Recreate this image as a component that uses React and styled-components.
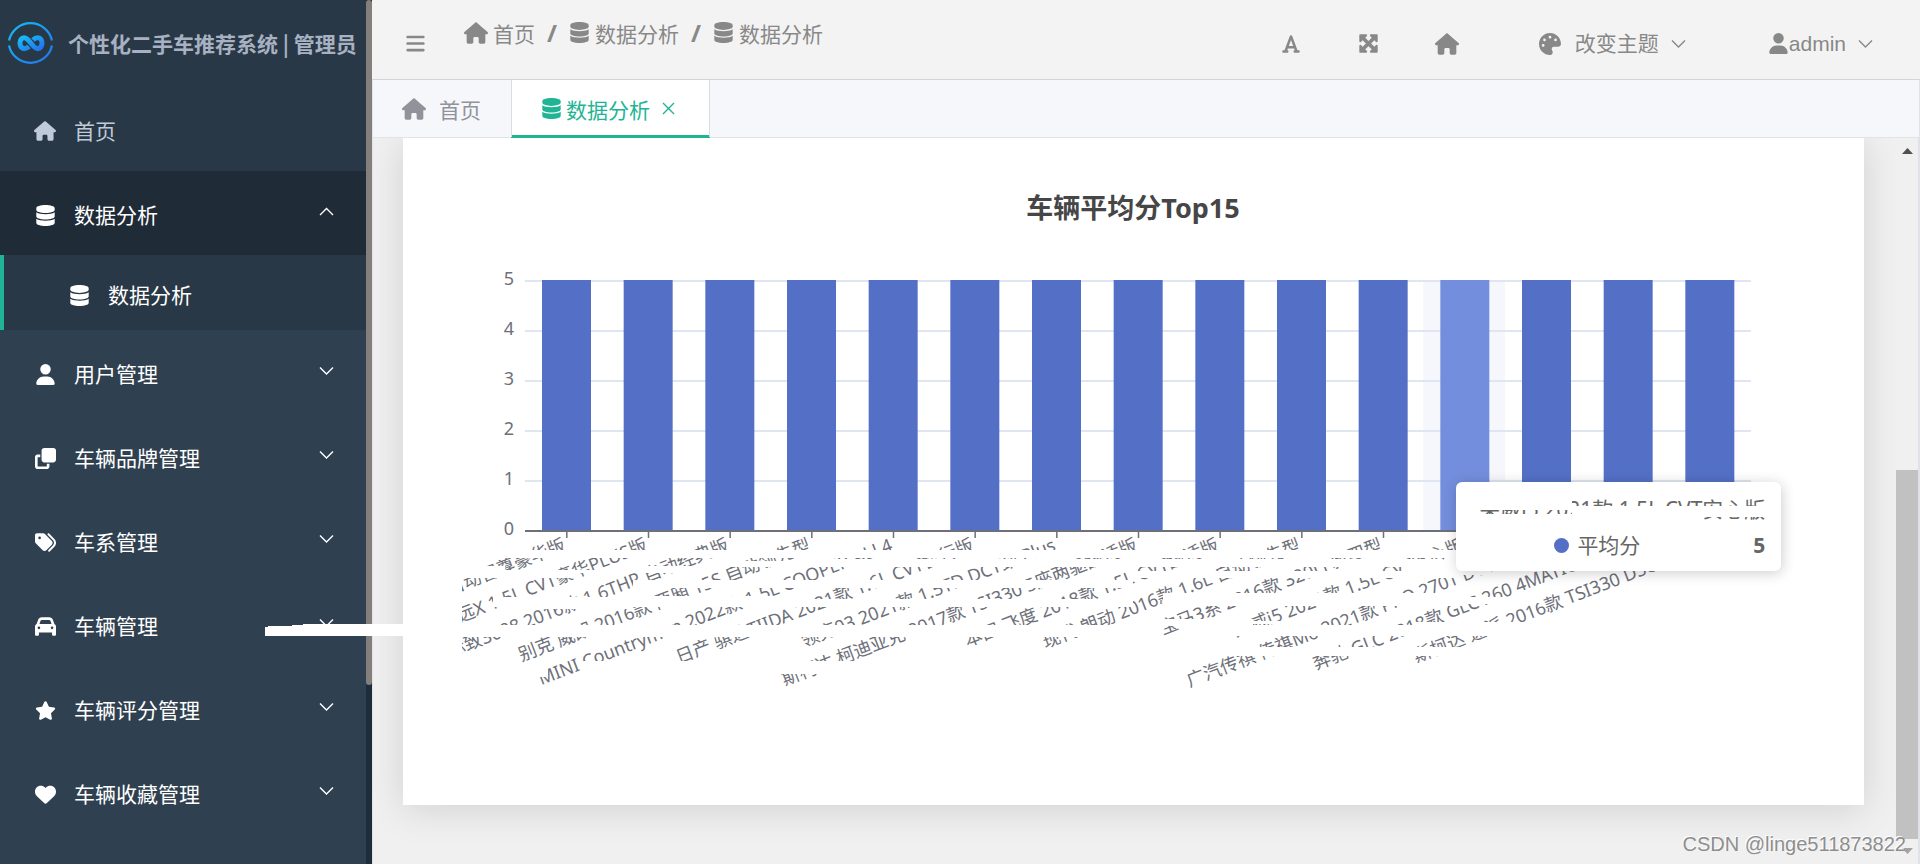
import React from "react";
import styled, { createGlobalStyle, css } from "styled-components";
import {
  FaHouse, FaUser, FaClone, FaTags, FaCar, FaStar, FaHeart,
  FaBars, FaFont, FaMaximize, FaPalette,
} from "react-icons/fa6";
import { FaDatabase } from "react-icons/fa";

const sans = '"Noto Sans", "Noto Sans CJK SC", sans-serif';
const green = "#1fb494";

const Global = createGlobalStyle`
  * { box-sizing: border-box; }
  body { margin: 0; font-family: "Noto Sans CJK SC", sans-serif; font-size: 21px; line-height: 30px; overflow: hidden; }
  button, a { font: inherit; color: inherit; text-decoration: none; }
  button { background: none; border: 0; padding: 0; cursor: pointer; }
  h1, h2, ul, ol { margin: 0; padding: 0; list-style: none; }
`;

const Shell = styled.div`
  display: flex;
  height: 100vh;
  position: relative;
`;

const Sidebar = styled.aside`
  width: 372px;
  flex: none;
  display: flex;
  background: #2f4050;
`;

const SideBody = styled.div`
  flex: 1;
  overflow: hidden;
`;

const SideTrack = styled.div`
  width: 6px;
  background: #1f2d3a;
`;

const SideThumb = styled.div`
  height: 79.3%;
  background: #827f7d;
  border-radius: 3px;
`;

const Brand = styled.header`
  height: 87px;
  background: #293846;
  display: flex;
  align-items: center;
  gap: 14px;
  padding-left: 7px;
  color: #a7b1c2;
  h1 { font-size: 21px; font-weight: 700; white-space: nowrap; padding-bottom: 2px; }
`;

const MenuButton = styled.button`
  display: flex;
  align-items: center;
  width: 100%;
  height: 84px;
  padding: 4px 32px 0 33px;
  color: #fff;
  text-align: left;
  ${(p) => p.$tone === "home" && css`background: #293846; color: #bfcbd9;`}
  ${(p) => p.$tone === "open" && css`background: #202b38;`}
  ${(p) => p.$tone === "sub" && css`
    background: #293846;
    height: 75px;
    border-left: 4px solid ${green};
    padding-top: 6px;
    padding-left: 63px;
  `}
  > svg { margin-bottom: 6px; }
`;

const IconSlot = styled.span`
  width: 24px;
  height: 22px;
  display: flex;
  justify-content: center;
  align-items: center;
  margin-right: 17px;
  flex: none;
`;

const MenuText = styled.span`
  flex: 1;
  padding-bottom: 3px;
`;

const Main = styled.main`
  flex: 1;
  min-width: 0;
  display: flex;
  flex-direction: column;
  background: #f0f0f0;
`;

const TopBar = styled.header`
  height: 79px;
  flex: none;
  background: #f3f3f3;
  display: flex;
  align-items: center;
  padding: 8px 47px 0 33px;
  color: #888;
`;

const Crumbs = styled.ol`
  display: flex;
  align-items: center;
  margin: -22px auto 0 38px;
  li { display: flex; align-items: center; }
  li + li::before { content: "/"; font-weight: 700; font-family: ${sans}; font-size: 24px; margin: 0 12px; }
  a { display: flex; align-items: center; gap: 5px; }
`;

const Tools = styled.div`
  display: flex;
  align-items: center;
`;

const ToolButton = styled.button`
  display: flex;
  align-items: center;
  justify-content: center;
  width: 24px;
  height: 30px;
  margin-right: ${(p) => p.$after || 54}px;
`;

const DropButton = styled.button`
  display: flex;
  align-items: center;
  gap: ${(p) => p.$gap}px;
  margin-left: ${(p) => p.$before}px;
  svg:last-child { margin-left: ${(p) => 12 - p.$gap}px; }
  font-family: "Liberation Sans", "Noto Sans CJK SC", sans-serif;
`;

const TabBar = styled.nav`
  height: 59px;
  flex: none;
  display: flex;
  background: #f5f7fb;
  border: 1px solid #e0e3ea;
  border-top-color: #d1d4db;
`;

const Tab = styled.a`
  display: flex;
  align-items: center;
  gap: ${(p) => (p.$active ? 4 : 13)}px;
  padding: 0 ${(p) => (p.$active ? 34 : 30)}px 0 29px;
  color: ${(p) => (p.$active ? green : "#909399")};
  ${(p) => p.$active && css`
    background: #fff;
    border: solid #d9dce3;
    border-width: 0 1px;
    box-shadow: inset 0 -2px ${green}, 0 1px ${green};
    button { height: 30px; display: flex; align-items: center; margin-left: 8px; }
  `}
`;

const Viewport = styled.div`
  flex: 1;
  min-height: 0;
  display: flex;
  border: solid #dfe2e8;
  border-width: 0 2px 0 1px;
`;

const Scrolled = styled.div`
  flex: 1;
  min-width: 0;
  padding: 0 32px 0 30px;
  overflow: hidden;
`;

const Card = styled.section`
  position: relative;
  background: #fff;
  box-shadow: 0 4px 36px rgba(0, 0, 0, 0.13);
`;

const Scrollbar = styled.div`
  width: 22px;
  display: flex;
  flex-direction: column;
  align-items: center;
  background: #f0f0f0;
  svg { flex: none; }
`;

const ThumbGap = styled.div`
  flex: 307;
`;

const Thumb = styled.div`
  flex: 369;
  width: 100%;
  background: #c1c1c1;
`;

const Chart = styled.svg`
  display: block;
  width: 100%;
  height: auto;
  font-family: ${sans};
`;

const Tooltip = styled.div`
  position: absolute;
  left: 72.1%;
  top: 51.6%;
  width: 325px;
  height: 89px;
  padding: 12px 16px 0;
  background: #fff;
  border-radius: 6px;
  box-shadow: 1px 2px 14px rgba(0, 0, 0, 0.2);
  color: #666;
  font-family: ${sans};
`;

const TipTitle = styled.div`
  position: relative;
  height: 30px;
  text-align: right;
  white-space: nowrap;
`;

const TipRow = styled.div`
  display: flex;
  align-items: center;
  height: 42px;
  padding-left: 82px;
  b { margin-left: auto; }
`;

const Dot = styled.i`
  width: 15px;
  height: 15px;
  border-radius: 50%;
  background: #5470c6;
  margin-right: 8px;
`;

/* White scrub strip lying over text */
const Strip = styled.span`
  position: absolute;
  left: ${(p) => p.$x}px;
  top: ${(p) => p.$y}px;
  width: ${(p) => p.$w}px;
  height: ${(p) => p.$h}px;
  background: #fff;
`;

const SideStroke = styled.svg`
  position: absolute;
  left: 265px;
  top: 624px;
`;

const Watermark = styled.div`
  position: absolute;
  right: 14px;
  bottom: 5px;
  font: 20px/30px "Liberation Sans", sans-serif;
  color: #8e8e8e;
  text-shadow: -1px -1px 0 #fff;
`;

const Chevron = ({ up, size = 15 }) => (
  <svg width={size} height="10" viewBox="0 0 15 10" fill="none" stroke="currentColor" strokeWidth="1.4">
    <path d={up ? "M1 8 L7.5 1.5 L14 8" : "M1 1.5 L7.5 8 L14 1.5"} />
  </svg>
);

const Logo = () => (
  <svg width="47" height="47" viewBox="0 0 47 47" fill="none">
    <defs>
      <linearGradient id="ring" x1="0" y1="0" x2="1" y2="1">
        <stop offset="0" stopColor="#16bdf5" />
        <stop offset="1" stopColor="#2273ee" />
      </linearGradient>
    </defs>
    <g stroke="url(#ring)">
      <path strokeWidth="2.2" d="M2 20.5 A22 22 0 0 1 45 20.5 M45 25.5 A22 22 0 0 1 2 25.5" />
      <path strokeWidth="5" d="M26 20 C28 18 29.500 17.800 30.800 17.800 C33.700 17.800 35 20.300 35 23.300 C35 26.300 33.500 28.700 30.800 28.700 C26 28.700 22 17.800 17.200 17.800 C14.300 17.800 13 20.300 13 23.300 C13 26.300 14.500 28.700 17.200 28.700 C19 28.700 20.500 28 22 26.500" />
    </g>
  </svg>
);

const menu = [
  ["首页", FaHouse, "home"],
  ["数据分析", FaDatabase, "open"],
  ["数据分析", FaDatabase, "sub"],
  ["用户管理", FaUser],
  ["车辆品牌管理", FaClone],
  ["车系管理", FaTags],
  ["车辆管理", FaCar],
  ["车辆评分管理", FaStar],
  ["车辆收藏管理", FaHeart],
];

const cars = [
  "自动智尊豪华版",
  "致远X 1.5L CVT豪华PLUS版",
  "标致3008 2016款 1.6THP 自动经典版",
  "别克 威朗 2016款 两厢 15S 自动领先型",
  "MINI Countryman 2022款 1.5L COOPER ALL4",
  "日产 骐达TIIDA 2021款 1.6L CVT智行版",
  "领克03 2021款 1.5TD DCT劲 Plus",
  "斯柯达 柯迪亚克 2017款 TSI330 5座两驱舒适版",
  "本田 飞度 2018款 1.5L CVT舒适版",
  "现代 朗动 2016款 1.6L 自动领先型",
  "宝马3系 2016款 320Li 新四型",
  "荣威i5 2021款 1.5L CVT安心版",
  "广汽传祺 传祺M6 2021款 PRO 270T DCT豪华版",
  "奔驰 GLC 2018款 GLC 260 4MATIC动感型",
  "斯柯达 速派 2016款 TSI330 DSG旗舰版",
];

/* Scrubbed areas of the label block: x, y, width, height */
const strips = [
  [0, 412, 1054, 8],
  [0, 432, 62, 8], [62, 428, 40, 12], [102, 432, 120, 3], [102, 435, 75, 5],
  [222, 428, 78, 7], [300, 423, 100, 6], [400, 421, 640, 8],
  [140, 459, 90, 12], [230, 442, 170, 8], [230, 458, 170, 11],
  [90, 459, 60, 10], [400, 442, 330, 8], [730, 433, 330, 7], [1000, 428, 88, 9],
  [400, 461, 330, 8], [760, 455, 300, 13],
  [0, 487, 750, 12], [750, 481, 100, 7], [850, 483, 60, 3], [830, 487, 300, 11],
  [1054, 459, 50, 7], [1020, 460, 120, 5],
  [75, 532, 70, 7], [180, 523, 270, 13],
  [760, 509, 370, 9], [1010, 484, 120, 14], [1000, 526, 90, 3],
];

const X0 = 122;
const STEP = 1225 / 15;

function ScoreChart() {
  return (
    <Chart viewBox="0 0 1461 667" role="img" aria-label="车辆平均分Top15">
      <defs>
        <clipPath id="canvas"><rect x="59" y="0" width="1400" height="667" /></clipPath>
      </defs>
      <text x="730" y="80" textAnchor="middle" fontSize="27" fontWeight="700" fill="#464646">车辆平均分Top15</text>
      <rect x={X0 + 11 * STEP} y="143" width={STEP} height="250" fill="#f5f7fc" />
      {[5, 4, 3, 2, 1, 0].map((n, i) => (
        <g key={n}>
          <path d={`M${X0} ${143 + i * 50}H1348`} stroke={n ? "#e0e6f1" : "#6e7079"} strokeWidth="2" />
          <text x="111" y={147 + i * 50} textAnchor="end" fontSize="18" fill="#6e7079">{n}</text>
        </g>
      ))}
      {cars.map((name, i) => (
        <rect key={name} x={X0 + i * STEP + 17} y="142" width="49" height="250" fill={i === 11 ? "#738edd" : "#5470c6"} />
      ))}
      <g clipPath="url(#canvas)">
        {cars.map((name, i) => {
          const x = X0 + (i + 0.5) * STEP + 1;
          return (
            <g key={name}>
              <path d={`M${x} 393v7`} stroke="#6e7079" strokeWidth="1.5" />
              <text transform={`translate(${x} 412) rotate(-21)`} textAnchor="end" fontSize="18" fill="#6e7079">{name}</text>
            </g>
          );
        })}
      </g>
      <g fill="#fff">
        {strips.map(([x, y, w, h], i) => <rect key={i} x={x} y={y} width={w} height={h} />)}
      </g>
    </Chart>
  );
}

export default function App() {
  return (
    <Shell>
      <Global />
      <Sidebar>
        <SideBody>
          <Brand><Logo /><h1>个性化二手车推荐系统 | 管理员</h1></Brand>
          <nav>
            {menu.map(([text, Icon, tone], i) => (
              <MenuButton key={i} $tone={tone}>
                <IconSlot><Icon size={tone === "home" ? 22 : 21} /></IconSlot>
                <MenuText>{text}</MenuText>
                {tone !== "home" && tone !== "sub" && <Chevron up={tone === "open"} />}
              </MenuButton>
            ))}
          </nav>
        </SideBody>
        <SideTrack><SideThumb /></SideTrack>
      </Sidebar>

      <Main>
        <TopBar>
          <button aria-label="菜单"><FaBars size={21} display="block" /></button>
          <Crumbs>
            <li><a href="#home"><FaHouse size={24} />首页</a></li>
            <li><a href="#data"><FaDatabase size={21} />数据分析</a></li>
            <li><a href="#data"><FaDatabase size={21} />数据分析</a></li>
          </Crumbs>
          <Tools>
            <ToolButton aria-label="字体"><FaFont size={20} /></ToolButton>
            <ToolButton aria-label="全屏"><FaMaximize size={21} /></ToolButton>
            <ToolButton aria-label="主页" $after={80}><FaHouse size={24} /></ToolButton>
            <DropButton $gap={14} $before={0}><FaPalette size={22} />改变主题<Chevron /></DropButton>
            <DropButton $gap={0} $before={82}><FaUser size={21} />admin<Chevron /></DropButton>
          </Tools>
        </TopBar>
        <TabBar>
          <Tab href="#home"><FaHouse size={24} />首页</Tab>
          <Tab href="#data" $active>
            <FaDatabase size={21} />数据分析
            <button aria-label="关闭">
              <svg width="13" height="13" viewBox="0 0 13 13" stroke="currentColor" strokeWidth="1.4"><path d="M1 1 12 12M12 1 1 12" /></svg>
            </button>
          </Tab>
        </TabBar>
        <Viewport>
          <Scrolled>
            <Card>
              <ScoreChart />
              <Tooltip>
                <TipTitle>
                  荣威i5 2021款 1.5L CVT安心版
                  <Strip $x={-4} $y={0} $w={104} $h={16} />
                  <Strip $x={-4} $y={20} $w={104} $h={12} />
                  <Strip $x={100} $y={12} $w={122} $h={20} />
                  <Strip $x={222} $y={12} $w={75} $h={11} />
                  <Strip $x={222} $y={26} $w={75} $h={6} />
                </TipTitle>
                <TipRow><Dot />平均分<b>5</b></TipRow>
              </Tooltip>
            </Card>
          </Scrolled>
          <Scrollbar>
            <svg width="21" height="25" viewBox="0 0 21 25"><path d="M10.500 10 L16 16 H5 Z" fill="#505050" /></svg>
            <ThumbGap />
            <Thumb />
            <svg width="21" height="25" viewBox="0 0 21 25"><path d="M10.500 15 L16 9 H5 Z" fill="#a3a3a3" /></svg>
          </Scrollbar>
        </Viewport>
      </Main>
      <SideStroke width="139" height="12"><path d="M0 3H3V2H27V1H38V0H139V12H0Z" fill="#fff" /></SideStroke>
      <Watermark>CSDN @linge511873822</Watermark>
    </Shell>
  );
}
